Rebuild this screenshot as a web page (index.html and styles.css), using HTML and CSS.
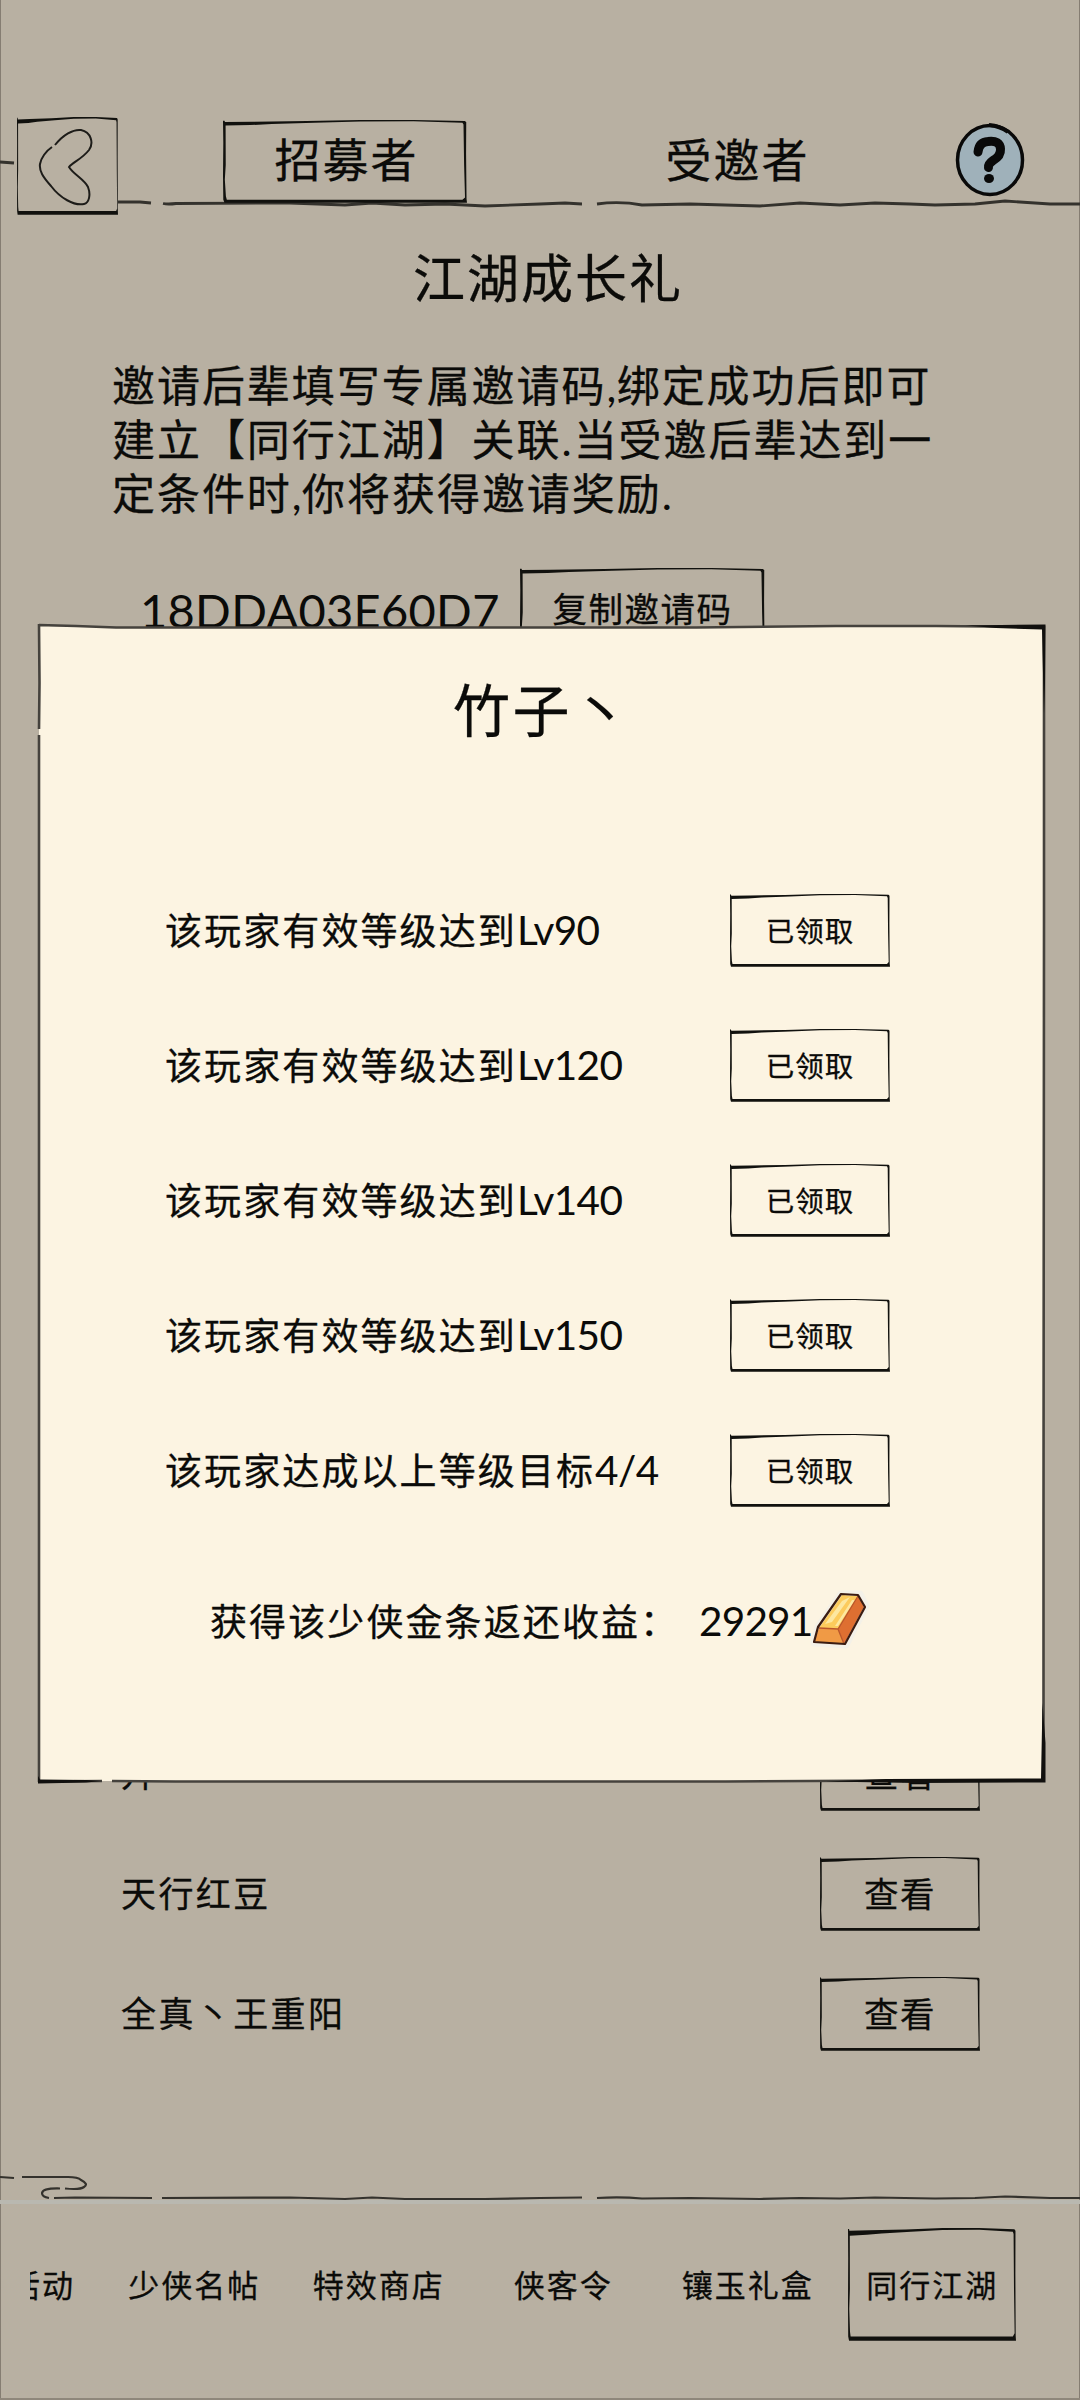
FILE: index.html
```html
<!DOCTYPE html>
<html lang="zh-CN">
<head>
<meta charset="utf-8">
<title>同行江湖</title>
<link rel="stylesheet" href="styles.css">
</head>
<body>
<svg class="defs" aria-hidden="true">
  <symbol id="frame" viewBox="0 0 160 74" preserveAspectRatio="none">
    <path d="M0 .6 L1 .6 L1.3 1.8 L20 1.500 L55 1 L90 0 L125 0 L158.500 .8 L159.500 1.8 L159.400 30 L159.700 70.500 L160 73.800 L1 73.800 L.2 71 L0 50 L.2 20 Z M1.700 5 L1.800 40 L1.200 53 L1.900 68 L2.500 71 L157 71 L158.700 69 L158.100 40 L157.700 4 L157 2.400 L125 1.100 L90 1.300 L60 2.500 L32 3.600 L18 4.500 Z" fill-rule="evenodd"/>
  </symbol>
  <symbol id="ink-line" viewBox="0 0 1080 12" preserveAspectRatio="none">
    <path d="M118 4 L140 4 L151 5 M163 5.500 Q168 6.500 176 5.500 L290 5 L345 7 L372 5 L405 7 L445 6 L485 8 L540 6 L565 5 L582 6 M597 6 Q620 3 642 7 L690 6 L760 8 L800 5 L840 7 L875 5 L910 6 L935 7 L975 6 L1005 3 L1050 6 L1080 6"/>
  </symbol>
</svg>

<div class="page">
  <header class="topbar">
    <svg class="topbar-line"><use href="#ink-line"/><path d="M0 -36 L14 -35"/></svg>
    <div class="back">
      <svg class="frame"><use href="#frame"/></svg>
      <svg class="back-arrow" viewBox="0 0 56 78"><path d="M17 17 C25 7 35 1 43 2 C53 4 56 15 51 22 C44 31 35 34 31 39 C36 47 46 51 50 59 C53 67 51 75 46 76 C36 78 22 70 13 58 C5 49 1 43 2 36 C3 30 8 23 14 19"/></svg>
    </div>
    <div class="tab tab-on"><svg class="frame"><use href="#frame"/></svg><span>招募者</span></div>
    <div class="tab"><span>受邀者</span></div>
    <svg class="help" viewBox="0 0 70 74">
      <ellipse cx="35" cy="37" rx="32.500" ry="34.500"/>
      <path class="help-arc" d="M34 2 Q45 3 53 9"/>
      <path class="help-mark" d="M23 29 Q24 19 33 18.500 Q45 17 45.500 26 Q46 33 38 37.500 Q33 41 33.500 44.500"/>
      <ellipse class="help-dot" cx="34" cy="55.500" rx="5" ry="4.500"/>
    </svg>
  </header>

  <main class="content">
    <h1 class="title">江湖成长礼</h1>
    <p class="intro">邀请后辈填写专属邀请码<i class="comma">,</i>绑定成功后即可<br>建立【同行江湖】关联<i class="dot">.</i>当受邀后辈达到一<br>定条件时<i class="comma">,</i>你将获得邀请奖励<i class="dot">.</i></p>
    <div class="code-row">
      <span class="code">18DDA03E60D7</span>
      <div class="copy"><svg class="frame"><use href="#frame"/></svg><span>复制邀请码</span></div>
    </div>
    <ul class="friends">
      <li><span class="name">升</span><div class="view"><svg class="frame"><use href="#frame"/></svg><span>查看</span></div></li>
      <li><span class="name">天行红豆</span><div class="view"><svg class="frame"><use href="#frame"/></svg><span>查看</span></div></li>
      <li><span class="name">全真丶王重阳</span><div class="view"><svg class="frame"><use href="#frame"/></svg><span>查看</span></div></li>
    </ul>
  </main>

  <footer class="bottom">
    <svg class="bottom-line" viewBox="0 0 1080 40">
      <path class="haze" d="M0 32 H1080"/>
      <path d="M0 7 L14 8 M22 7 L68 7 Q78 7 81 10 Q89 14 84 17 Q80 20 65 18.500 M60 18.500 Q43 18 42 23 Q42 27 49 28 M54 28 L75 27.500 L152 28 M162 28 L290 27.500 L345 29 L372 27.500 L405 29 L485 29 L540 28 L582 27.500 M597 28 Q620 26.500 642 28.500 L690 28 L760 29 L800 28 L840 28.500 L875 27.500 L935 28.500 L975 28 L1005 26.500 L1050 28 L1080 28"/>
    </svg>
    <nav class="nav">
      <div class="nav-item nav-first"><span>活动</span></div>
      <div class="nav-item"><span>少侠名帖</span></div>
      <div class="nav-item"><span>特效商店</span></div>
      <div class="nav-item"><span>侠客令</span></div>
      <div class="nav-item"><span>镶玉礼盒</span></div>
      <div class="nav-item"><div class="nav-on"><svg class="frame"><use href="#frame"/></svg><span>同行江湖</span></div></div>
    </nav>
  </footer>
</div>

<section class="modal">
  <svg class="modal-frame" viewBox="0 0 1010 1162">
    <path class="paper" d="M3 3 L60 4 L700 4 L850 2 L1007 4 L1007 1157 L850 1157 L690 1158 L3 1158 Z"/>
    <path class="line" d="M3 2 L40 3 L80 4.500 L660 4.500 L800 3 L900 3 L1008 4 L1008 300 L1007.500 900 L1007.500 1156 M870 1157.500 L690 1158.500 L140 1158.500 L76 1158 M66 1158 L3 1158.500 M3 1159 L3 1080 L3 112 M3 106 L3.500 60 L3 1"/>
    <path class="bold" d="M2 1153 L4 1156.500 L50 1157 L66 1158 L50 1159.500 L2 1160.500 Z M1006.500 1080 L1009.500 1120 L1009.500 1159.500 L880 1160 L790 1158.500 L850 1156 L1005 1155.500 Z M930 2.500 L1009.500 1.500 L1009 60 L1008 90 L1006.500 30 L1006 6.500 L960 5 Z"/>
  </svg>
  <h2>竹子丶</h2>
  <div class="goals">
    <div class="goal"><span>该玩家有效等级达到<b>Lv90</b></span><div class="got"><svg class="frame"><use href="#frame"/></svg><span>已领取</span></div></div>
    <div class="goal"><span>该玩家有效等级达到<b>Lv120</b></span><div class="got"><svg class="frame"><use href="#frame"/></svg><span>已领取</span></div></div>
    <div class="goal"><span>该玩家有效等级达到<b>Lv140</b></span><div class="got"><svg class="frame"><use href="#frame"/></svg><span>已领取</span></div></div>
    <div class="goal"><span>该玩家有效等级达到<b>Lv150</b></span><div class="got"><svg class="frame"><use href="#frame"/></svg><span>已领取</span></div></div>
    <div class="goal"><span>该玩家达成以上等级目标<b>4/4</b></span><div class="got"><svg class="frame"><use href="#frame"/></svg><span>已领取</span></div></div>
  </div>
  <div class="income">
    <span class="income-label">获得该少侠金条返还收益：</span>
    <b>29291</b>
    <svg class="gold" viewBox="0 0 60 62">
      <path class="halo" d="M31 4 L50 4 L56 16 L36 55 L4 53 L8 37 Z"/>
      <path fill="#fccb5c" d="M32 5 L48 6 L28 39 L9 38 Z"/>
      <path fill="#fde7a0" d="M32 11 L40 7 L22 32 L15 34 Z M42 10 L45 10 L28 36 L25 36 Z"/>
      <path fill="#f09a45" d="M9 38 L28 39 L34 54 L4 52 Z"/>
      <path fill="#de6f31" d="M48 6 L54 17 L34 54 L28 39 Z"/>
      <path class="ridge" d="M9 38 L28 39 L48 6 M28 39 L34 54"/>
      <path class="rim" d="M31 4 L48 5 L55 17 L35 54 L4 52 L8 37 Z"/>
    </svg>
  </div>
</section>
</body>
</html>
```
FILE: styles.css
```css
* { box-sizing: border-box; }
body {
  margin: 0;
  width: 1080px;
  height: 2400px;
  position: relative;
  overflow: hidden;
  background: #b8b0a2;
  color: #0b0b09;
  font-family: "Lato", "Noto Sans CJK SC", sans-serif;
  font-weight: 400;
  -webkit-text-stroke: 0.3px #0b0b09;
}
h1, h2, p, ul { margin: 0; padding: 0; font-weight: 400; }
b, i { font-weight: 400; font-style: normal; -webkit-text-stroke: 0; }
.defs { position: absolute; width: 0; height: 0; }
.frame { position: absolute; left: 0; top: 0; width: 100%; height: 100%; fill: #11110e; }

.page {
  height: 2400px;
  display: flex;
  flex-direction: column;
  border-bottom: 2px solid #8f877b;
  box-shadow: inset 1px 0 #857d72, inset -1px 0 #857d72;
}

.topbar { position: relative; height: 220px; padding: 117px 0 0 17px; display: flex; align-items: flex-start; }
.topbar-line { position: absolute; left: 0; top: 198px; width: 1080px; height: 12px; overflow: visible; fill: none; stroke: #34322d; stroke-width: 2.8; }
.topbar-line use { height: 12px; width: 1080px; }
.back { position: relative; width: 101px; height: 98px; padding: 11px 0 0 21px; }
.back-arrow { display: block; width: 56px; height: 78px; fill: none; stroke: #1d1c19; stroke-width: 2; }
.tab { position: relative; width: 244px; height: 83px; margin: 3px 0 0 105px; padding: 0 0 3px 3px; display: flex; align-items: center; justify-content: center; font-size: 46px; letter-spacing: 2px; line-height: 60px; }
.tab + .tab { margin-left: 147px; }
.help { width: 70px; height: 74px; margin: 6px 0 0 97px; }
.help ellipse { fill: #9fb1ba; stroke: #090909; stroke-width: 3.5; }
.help .help-dot { fill: #090909; stroke: none; }
.help-arc { fill: none; stroke: #090909; stroke-width: 4; }
.help-mark { fill: none; stroke: #090909; stroke-width: 9; stroke-linecap: round; }

.content { flex: 1; display: flex; flex-direction: column; }
.title { height: 80px; margin-top: 18px; text-align: center; font-size: 52px; line-height: 80px; letter-spacing: 2px; padding-left: 16px; }
.intro { margin: 41px 0 0 112px; font-size: 43px; line-height: 54px; letter-spacing: 1.95px; white-space: nowrap; }
.comma { letter-spacing: 0.500px; }
.dot { letter-spacing: 2px; }
.code-row { display: flex; align-items: flex-start; margin-top: 47px; padding-left: 140px; }
.code { width: 380px; font-size: 47px; line-height: 82px; letter-spacing: 0.3px; padding-top: 1px; -webkit-text-stroke: 0; }
.copy { position: relative; width: 245px; height: 82px; padding-bottom: 4px; display: flex; align-items: center; justify-content: center; font-size: 34.500px; letter-spacing: 1.5px; }
.friends { list-style: none; margin-top: 1086px; display: flex; flex-direction: column; gap: 47px; padding: 0 100px 0 121px; }
.friends li { display: flex; align-items: center; justify-content: space-between; height: 73px; }
.name { font-size: 35px; letter-spacing: 2.400px; padding-bottom: 4px; }
.view { position: relative; width: 160px; height: 74px; padding-bottom: 4px; display: flex; align-items: center; justify-content: center; font-size: 34.500px; letter-spacing: 1.5px; }

.bottom { height: 228px; }
.bottom-line { display: block; width: 1080px; height: 40px; fill: none; stroke: #34322d; stroke-width: 2.2; }
.bottom-line .haze { stroke: #b9b8b0; stroke-width: 4; }
.nav { display: flex; height: 170px; margin-left: 30px; padding-top: 18px; overflow: hidden; font-size: 31px; letter-spacing: 2px; }
.nav-item { flex: none; width: 184.500px; height: 113px; padding-bottom: 3px; display: flex; align-items: center; justify-content: center; white-space: nowrap; }
.nav-first { width: 72px; justify-content: flex-end; padding-right: 27px; }
.nav-on { flex: none; position: relative; width: 168px; height: 113px; margin-bottom: -3px; padding-bottom: 3px; display: flex; align-items: center; justify-content: center; }

.modal { position: absolute; left: 36px; top: 623px; width: 1010px; height: 1162px; display: flex; flex-direction: column; }
.modal > :not(.modal-frame) { position: relative; }
.modal-frame { position: absolute; left: 0; top: 0; width: 1010px; height: 1162px; fill: none; }
.paper { fill: #fcf4e2; }
.line { stroke: #45423d; stroke-width: 2.6; }
.bold { fill: #11100e; }
.modal h2 { margin-top: 47px; padding-left: 417px; font-size: 57px; line-height: 80px; letter-spacing: 2.500px; }
.goals { margin-top: 144px; display: flex; flex-direction: column; gap: 62px; padding: 0 156px 0 129px; }
.goal { height: 73px; display: flex; align-items: center; justify-content: space-between; font-size: 37px; letter-spacing: 2.100px; white-space: nowrap; }
.goal > span { padding-bottom: 4px; }
.goal b { font-size: 40.500px; letter-spacing: -0.600px; }
.got { position: relative; width: 160px; height: 73px; padding-bottom: 3px; display: flex; align-items: center; justify-content: center; font-size: 28.500px; letter-spacing: 1px; }
.income { display: flex; align-items: center; margin-top: 77px; padding-left: 174px; height: 76px; font-size: 37px; letter-spacing: 2.100px; }
.income-label { width: 489px; white-space: nowrap; padding-bottom: 5px; }
.income b { width: 111px; font-size: 40.500px; letter-spacing: -0.800px; padding-bottom: 4px; }
.gold { width: 60px; height: 62px; margin-top: -2px; }
.halo { fill: #f4f1e8; stroke: #f4f1e8; stroke-width: 7; stroke-linejoin: round; }
.ridge { fill: none; stroke: #b9552a; stroke-width: 1.3; }
.rim { fill: none; stroke: #3a1c12; stroke-width: 2.2; stroke-linejoin: round; }
```
